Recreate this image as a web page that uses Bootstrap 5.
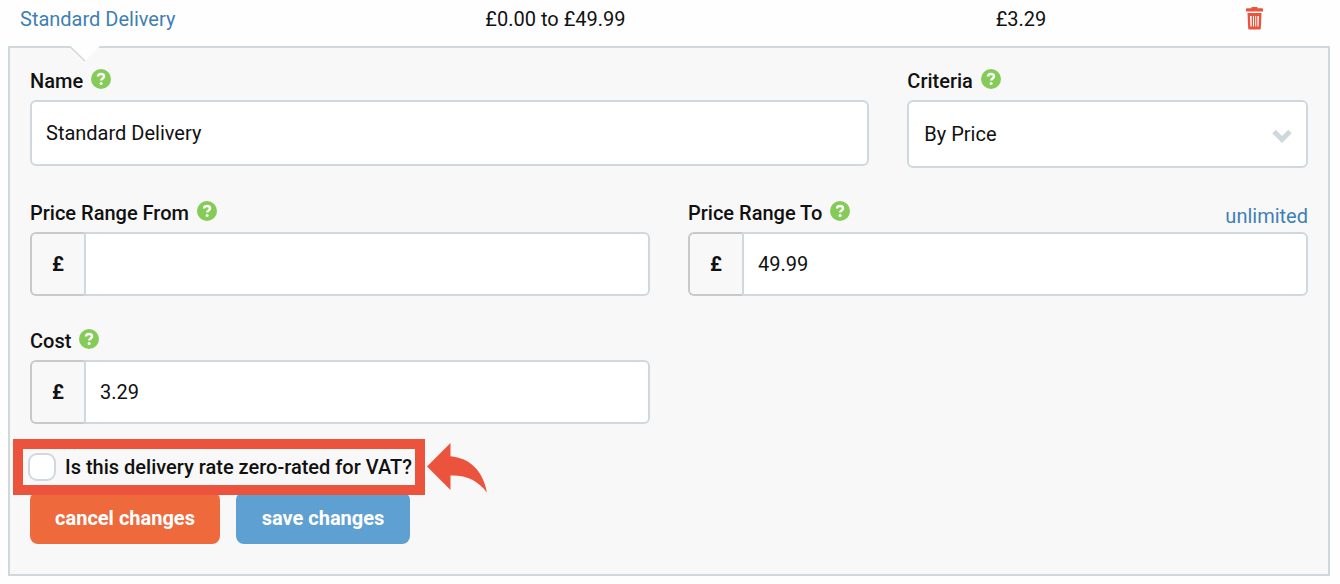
<!DOCTYPE html>
<html lang="en">
<head>
<meta charset="utf-8">
<meta name="viewport" content="width=device-width, initial-scale=1">
<title>Delivery rates</title>
<link href="https://cdn.jsdelivr.net/npm/bootstrap@5.3.0/dist/css/bootstrap.min.css" rel="stylesheet">
<style>
  :root { --line: #cfd9dd; --panel: #f8f8f8; --accent: #ec533c; --ink: #111; --sky: #3e80b4; }
  body { font-family: Roboto, "Liberation Sans", sans-serif; font-size: 20px; line-height: 24px; color: var(--ink); background: #fefefe; }
  a { color: var(--sky); text-decoration: none; }
  .rates-page { padding: 0 10px 8px 8px; }
  .rates-table { table-layout: fixed; color: var(--ink); --bs-table-bg: transparent; }
  .rates-table td { padding: 7px 12px 15px; border: 0; height: 46px; color: var(--ink); }
  .col-rate { width: 35.2%; } .col-range { width: 38.6%; } .col-cost { width: 18.9%; }
  .btn-trash { border: 0; padding: 0; background: none; display: block; }
  .edit-panel { background: var(--panel); border: 2px solid var(--line); padding: 21px 20px 30px; }
  .panel-notch { position: absolute; left: 60px; top: -2px; }
  .fields { --bs-gutter-x: 38px; row-gap: 33px; }
  .field-head { height: 25px; margin-bottom: 6px; gap: 8px; }
  .field-head label { font-weight: 500; }
  .field-head a { padding-top: 3px; }
  .help { border: 0; padding: 0; background: none; display: block; height: 20px; }
  .help svg { display: block; }
  .field-box { border: 2px solid var(--line); border-radius: 6px; background-color: #fff; font-size: 20px; line-height: 24px; color: var(--ink); padding: 0 14px; height: 64px; }
  .field-box.name-box { height: 66px; }
  .field-box.pick-box { height: 68px; padding: 0 15px; background-size: 20px 14px; background-position: right 14px top 27px;
    background-image: url("data:image/svg+xml,%3Csvg xmlns='http://www.w3.org/2000/svg' viewBox='0 0 20 14'%3E%3Cpath d='M2 2.5l8 8 8-8' fill='none' stroke='%23cfd9dd' stroke-width='5'/%3E%3C/svg%3E"); }
  .unit { width: 54px; justify-content: center; background: var(--panel); border: 2px solid #c9c9c9; border-right: 0; border-radius: 6px; font-size: 20px; font-weight: 700; color: var(--ink); padding: 0; }
  .input-group > .field-box { margin-left: 0 !important; padding: 0 14px; }
  .vat-row { margin: 15px 0 0 -17px; position: relative; z-index: 1; gap: 2px; }
  .vat-box { border: 10px solid var(--accent); width: 412px; height: 56px; padding: 0 5px; gap: 9px; }
  .vat-box label { font-weight: 500; white-space: nowrap; }
  .vat-box .form-check-input { width: 28px; height: 28px; margin: 0; border: 2px solid var(--line); border-radius: 9px; background-color: #fff; flex: none; }
  .actions { margin-top: -3px; gap: 16px; }
  .actions .btn { border: 0; border-radius: 8px; height: 52px; padding: 0; color: #fff; font-size: 20px; font-weight: 700; }
  .btn-cancel, .btn-cancel:hover { background: #ee6a3c; width: 190px; }
  .btn-save, .btn-save:hover { background: #5fa0d3; width: 174px; }
</style>
</head>
<body>
<svg width="0" height="0" class="d-none" aria-hidden="true">
  <symbol id="help-mark" viewBox="0 0 20 20">
    <circle cx="10" cy="10" r="10" fill="#84cb58"/>
    <path d="M7 7.600C7 5.800 8.300 5 10 5s3 .9 3 2.400c0 2-2.800 2-2.800 4.100" fill="none" stroke="#fff" stroke-width="2.500"/>
    <circle cx="10.100" cy="14.500" r="1.500" fill="#fff"/>
  </symbol>
</svg>
<main class="rates-page">
  <table class="table rates-table mb-0">
    <colgroup><col class="col-rate"><col class="col-range"><col class="col-cost"><col></colgroup>
    <tbody>
      <tr>
        <td><a href="#rate">Standard Delivery</a></td>
        <td>£0.00 to £49.99</td>
        <td>£3.29</td>
        <td>
          <button type="button" class="btn-trash" aria-label="Delete rate">
            <svg class="d-block" width="18" height="24" viewBox="0 0 18 24" fill="#ec533c" aria-hidden="true">
              <path d="M6.500 0h6v1.200H17a1 1 0 0 1 1 1V4.500H1V2.200a1 1 0 0 1 1-1h4.500z"/>
              <path fill-rule="evenodd" d="M2.500 6h14l-.7 15.500a1 1 0 0 1-1 1H4.200a1 1 0 0 1-1-1zM5 9l.4 10.500h1.300V9zm3 0v10.500h1V9zm2.200 0v10.500h1V9zM12.400 9v10.500h1.200L14 9z"/>
            </svg>
          </button>
        </td>
      </tr>
    </tbody>
  </table>

  <form class="edit-panel position-relative" id="rate">
    <svg class="panel-notch" width="32" height="16" viewBox="0 0 32 16" aria-hidden="true">
      <path d="M0 0h30L15 15z" fill="#fefefe"/>
      <path d="M0 .5L15 15" fill="none" stroke="#cfd9dd" stroke-width="1.500"/>
    </svg>
    <div class="row fields">
      <div class="col-8">
        <div class="field-head d-flex align-items-start">
          <label for="rate-name">Name</label>
          <button type="button" class="help" aria-label="Help on name"><svg width="20" height="20"><use href="#help-mark"/></svg></button>
        </div>
        <input type="text" id="rate-name" class="form-control field-box name-box" value="Standard Delivery">
      </div>
      <div class="col-4">
        <div class="field-head d-flex align-items-start">
          <label for="rate-criteria">Criteria</label>
          <button type="button" class="help" aria-label="Help on criteria"><svg width="20" height="20"><use href="#help-mark"/></svg></button>
        </div>
        <select id="rate-criteria" class="form-select field-box pick-box"><option>By Price</option><option>By Weight</option></select>
      </div>
      <div class="col-6">
        <div class="field-head d-flex align-items-start">
          <label for="range-from">Price Range From</label>
          <button type="button" class="help" aria-label="Help on price range from"><svg width="20" height="20"><use href="#help-mark"/></svg></button>
        </div>
        <div class="input-group">
          <span class="input-group-text unit">£</span>
          <input type="text" id="range-from" class="form-control field-box">
        </div>
      </div>
      <div class="col-6">
        <div class="field-head d-flex align-items-start">
          <label for="range-to">Price Range To</label>
          <button type="button" class="help" aria-label="Help on price range to"><svg width="20" height="20"><use href="#help-mark"/></svg></button>
          <a href="#range-to" class="ms-auto">unlimited</a>
        </div>
        <div class="input-group">
          <span class="input-group-text unit">£</span>
          <input type="text" id="range-to" class="form-control field-box" value="49.99">
        </div>
      </div>
      <div class="col-6">
        <div class="field-head d-flex align-items-start">
          <label for="rate-cost">Cost</label>
          <button type="button" class="help" aria-label="Help on cost"><svg width="20" height="20"><use href="#help-mark"/></svg></button>
        </div>
        <div class="input-group">
          <span class="input-group-text unit">£</span>
          <input type="text" id="rate-cost" class="form-control field-box" value="3.29">
        </div>
      </div>
    </div>
    <div class="vat-row d-flex">
      <div class="vat-box d-flex align-items-center">
        <input type="checkbox" class="form-check-input" id="zero-vat">
        <label for="zero-vat">Is this delivery rate zero-rated for VAT?</label>
      </div>
      <svg width="62" height="56" viewBox="0 0 62 56" aria-hidden="true">
        <path d="M0 27.500L23.500 4v13.300C43 19 56 32 60 53.500 51 42 40 36 23.500 36.500V51z" fill="#ec533c"/>
      </svg>
    </div>
    <div class="actions d-flex">
      <button type="button" class="btn btn-cancel">cancel changes</button>
      <button type="submit" class="btn btn-save">save changes</button>
    </div>
  </form>
</main>
<script src="https://cdn.jsdelivr.net/npm/bootstrap@5.3.0/dist/js/bootstrap.bundle.min.js"></script>
</body>
</html>
